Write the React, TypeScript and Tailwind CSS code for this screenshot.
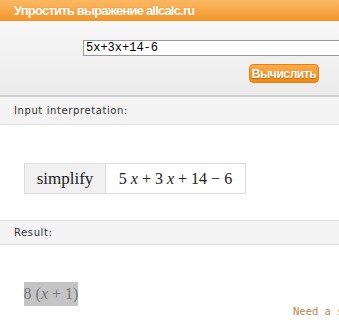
export default function App() {
  return (
    <div className="w-[339px] h-[320px] overflow-hidden bg-white font-['Liberation_Sans',sans-serif]">
      <div className="h-[21px] bg-gradient-to-b from-[#fbb862] to-[#f39526] pl-[14px] flex items-center">
        <span className="text-[13px] font-bold text-white leading-none tracking-[-0.8px] [text-shadow:0_0_1px_#d9801c] whitespace-nowrap">
          Упростить выражение allcalc.ru
        </span>
      </div>
      <div className="h-[76px] bg-gradient-to-b from-[#f7f7f7] to-[#ebebeb] border-b-2 border-[#cfcfcf] pt-[19px]">
        <div className="ml-[83px] h-[16px] bg-white border border-[#9a9a9a] border-r-0 flex items-center pl-[2px]">
          <span className="font-['Liberation_Mono',monospace] text-[12px] text-black leading-none">5x+3x+14-6</span>
        </div>
        <div className="flex justify-end pr-[20px] mt-[8px]">
          <button className="w-[70px] h-[19px] rounded-[4px] bg-gradient-to-b from-[#fcab4a] to-[#ef8a12] border border-[#e5830e] text-white text-[12px] font-bold leading-none tracking-[-0.4px] [text-shadow:0_1px_1px_#b86200]">
            Вычислить
          </button>
        </div>
      </div>
      <div className="h-[28px] bg-[#f4f4f4] border-b border-[#e2e2e2] pl-[14px] flex items-center">
        <span className="font-['DejaVu_Sans',sans-serif] text-[10px] text-[#333] tracking-[0.6px]">Input interpretation:</span>
      </div>
      <div className="h-[95px] pt-[38px] pl-[24px]">
        <div className="flex w-[222px] h-[31px] border border-[#dcdcdc] font-['Liberation_Serif',serif] text-[#222]">
          <div className="w-[81px] bg-[#f1f1f1] border-r border-[#dcdcdc] flex items-center justify-center text-[17px]">
            simplify
          </div>
          <div className="flex-1 flex items-center justify-center text-[16px] whitespace-nowrap">
            5&nbsp;<i>x</i>&nbsp;+&nbsp;3&nbsp;<i>x</i>&nbsp;+&nbsp;14&nbsp;−&nbsp;6
          </div>
        </div>
      </div>
      <div className="h-[25px] bg-[#f4f4f4] border-y border-[#dedede] pl-[14px] flex items-center">
        <span className="font-['DejaVu_Sans',sans-serif] text-[10px] text-[#333] tracking-[0.6px]">Result:</span>
      </div>
      <div className="relative h-[80px] pt-[37px] pl-[24px]">
        <div className="inline-flex items-center justify-center w-[54px] h-[24px] bg-[#c4c4c4] font-['Liberation_Serif',serif] text-[16px] text-[#777] whitespace-nowrap">
          8&nbsp;(<i>x</i>&nbsp;+&nbsp;1)
        </div>
        <span className="absolute left-[293px] top-[59px] font-['DejaVu_Sans_Mono',monospace] text-[10.5px] text-[#b8874e] whitespace-nowrap">
          Need a s
        </span>
      </div>
    </div>
  );
}
